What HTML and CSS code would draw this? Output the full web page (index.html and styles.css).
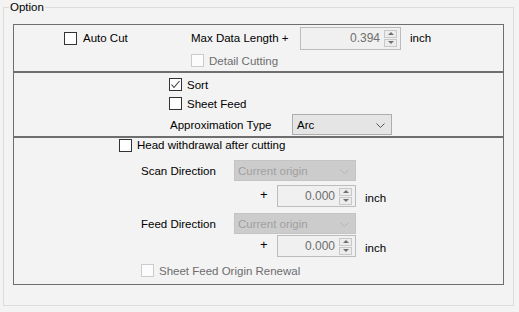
FILE: index.html
```html
<!DOCTYPE html>
<html lang="en">
<head>
  <meta charset="UTF-8" />
  <title>Option</title>
  <link rel="stylesheet" href="styles.css">
</head>
<body>
  <fieldset class="group">
    <legend>Option</legend>
    <div class="frame">

      <div class="panel p1">
        <div class="row row-cut">
          <label class="chk cell-cut"><span class="cb"></span>Auto Cut</label>
          <span class="lbl-max">Max Data Length +</span>
          <div class="spin-box w-max">
            <span class="val">0.394</span>
            <span class="spin"><i class="up"></i><i class="dn"></i></span>
          </div>
          <span class="unit">inch</span>
        </div>
        <div class="row row-detail">
          <label class="chk off"><span class="cb"></span>Detail Cutting</label>
        </div>
      </div>

      <div class="panel p2">
        <div class="row row-opt">
          <label class="chk"><span class="cb">
            <svg width="11" height="11" viewBox="0 0 11 11"><polyline points="1.5,5.5 4,8.5 9.5,2" fill="none" stroke="#3a3a3a" stroke-width="1.1"/></svg>
          </span>Sort</label>
        </div>
        <div class="row row-opt">
          <label class="chk"><span class="cb"></span>Sheet Feed</label>
        </div>
        <div class="row row-approx">
          <span class="lbl-approx">Approximation Type</span>
          <div class="select w-approx">
            <span>Arc</span>
            <svg class="chev" width="9" height="5" viewBox="0 0 9 5"><polyline points="0.5,0.5 4.5,4.5 8.5,0.5" fill="none" stroke="#555" stroke-width="1"/></svg>
          </div>
        </div>
      </div>

      <div class="panel p3">
        <div class="row row-head">
          <label class="chk"><span class="cb"></span>Head withdrawal after cutting</label>
        </div>
        <div class="row row-dir first">
          <span class="lbl-dir">Scan Direction</span>
          <div class="select off w-dir">
            <span>Current origin</span>
            <svg class="chev" width="9" height="5" viewBox="0 0 9 5"><polyline points="0.5,0.5 4.5,4.5 8.5,0.5" fill="none" stroke="#b4b4b4" stroke-width="1"/></svg>
          </div>
        </div>
        <div class="row row-plus">
          <span class="plus">+</span>
          <div class="spin-box w-off">
            <span class="val">0.000</span>
            <span class="spin"><i class="up"></i><i class="dn"></i></span>
          </div>
          <span class="unit">inch</span>
        </div>
        <div class="row row-dir second">
          <span class="lbl-dir">Feed Direction</span>
          <div class="select off w-dir">
            <span>Current origin</span>
            <svg class="chev" width="9" height="5" viewBox="0 0 9 5"><polyline points="0.5,0.5 4.5,4.5 8.5,0.5" fill="none" stroke="#b4b4b4" stroke-width="1"/></svg>
          </div>
        </div>
        <div class="row row-plus tight">
          <span class="plus">+</span>
          <div class="spin-box w-off">
            <span class="val">0.000</span>
            <span class="spin"><i class="up"></i><i class="dn"></i></span>
          </div>
          <span class="unit">inch</span>
        </div>
        <div class="row row-renew">
          <label class="chk off"><span class="cb"></span>Sheet Feed Origin Renewal</label>
        </div>
      </div>

    </div>
  </fieldset>
</body>
</html>
```

FILE: styles.css
```css
* { box-sizing: border-box; margin: 0; padding: 0; }
body {
  background: #f3f3f3;
  color: #000;
  font-family: "Liberation Sans", Arial, sans-serif;
  font-size: 11.5px;
  width: 519px; height: 312px;
  overflow: hidden;
}

/* group box */
.group {
  margin-left: 3px;
  width: 511px; height: 306px;
  border: 1px solid #dcdcdc;
  padding: 0;
}
.group legend {
  margin-left: 5px;
  padding: 0 1px;
  line-height: 15px;
}
.frame { margin: 9px 9px 0; }

.panel { border: 1px solid #6e6e6e; }
.p1 { height: 48px; padding-top: 2px; }
.p2 { height: 65px; padding-top: 2px; padding-left: 155px; }
.p3 { height: 148px; }

.row { display: flex; align-items: center; }

/* checkbox */
.chk { display: flex; align-items: center; gap: 5px; white-space: nowrap; }
.cb {
  width: 13px; height: 13px;
  border: 1px solid #333;
  background: #fff;
  display: flex; align-items: center; justify-content: center;
}
.chk.off { color: #6d6d6d; }
.chk.off .cb { border-color: #cccccc; background: #fcfcfc; }

/* panel 1 */
.row-cut { height: 22px; padding-left: 50px; }
.cell-cut { width: 127px; gap: 6px; }
.lbl-max { width: 109px; }
.w-max { width: 101px; height: 23px; }
.unit { margin-left: 9px; }
.row-detail { height: 19px; margin-top: 2px; padding-left: 177px; }

/* spinner */
.spin-box {
  display: flex; align-items: center; justify-content: flex-end;
  border: 1px solid #bcbcbc;
  background: #f0f0f0;
  color: #6d6d6d;
  font-size: 12px;
  padding-right: 3px;
}
.spin-box .val { margin-right: 4px; }
.spin { display: flex; flex-direction: column; gap: 1px; }
.spin i {
  width: 13px; height: 8px;
  border: 1px solid #c8c8c8;
  background: #ececec;
  display: flex; align-items: center; justify-content: center;
}
.spin i::after { content: ""; border-left: 3px solid transparent; border-right: 3px solid transparent; }
.spin .up::after { border-bottom: 3px solid #707070; }
.spin .dn::after { border-top: 3px solid #707070; }

/* select */
.select {
  display: flex; align-items: center; justify-content: space-between;
  height: 21px;
  border: 1px solid #adadad;
  background: #e5e5e5;
  padding: 0 6px 0 4px;
}
.select.off { border-color: #c4c4c4; background: #cccccc; color: #a0a0a0; padding-left: 3px; }
.chev { margin-top: 1px; }

/* panel 2 */
.row-opt { height: 19px; }
.row-approx { height: 21px; margin-top: 1px; }
.lbl-approx { width: 123px; padding-left: 1px; }
.w-approx { width: 100px; }

/* panel 3 */
.row-head { height: 14px; padding-left: 105px; }
.row-dir { height: 21px; padding-left: 127px; }
.row-dir.first { margin-top: 8px; }
.row-dir.second { margin-top: 6px; }
.lbl-dir { width: 93px; }
.w-dir { width: 122px; }
.row-plus { height: 22px; margin-top: 4px; padding-left: 246px; }
.row-plus.tight { margin-top: 1px; }
.plus { width: 17px; font-size: 13px; margin-top: -3px; }
.row-plus .unit { margin-top: 3px; }
.w-off { width: 79px; height: 22px; }
.row-renew { height: 21px; margin-top: 3px; padding-left: 127px; }
.row-renew .chk { gap: 5px; }
```
